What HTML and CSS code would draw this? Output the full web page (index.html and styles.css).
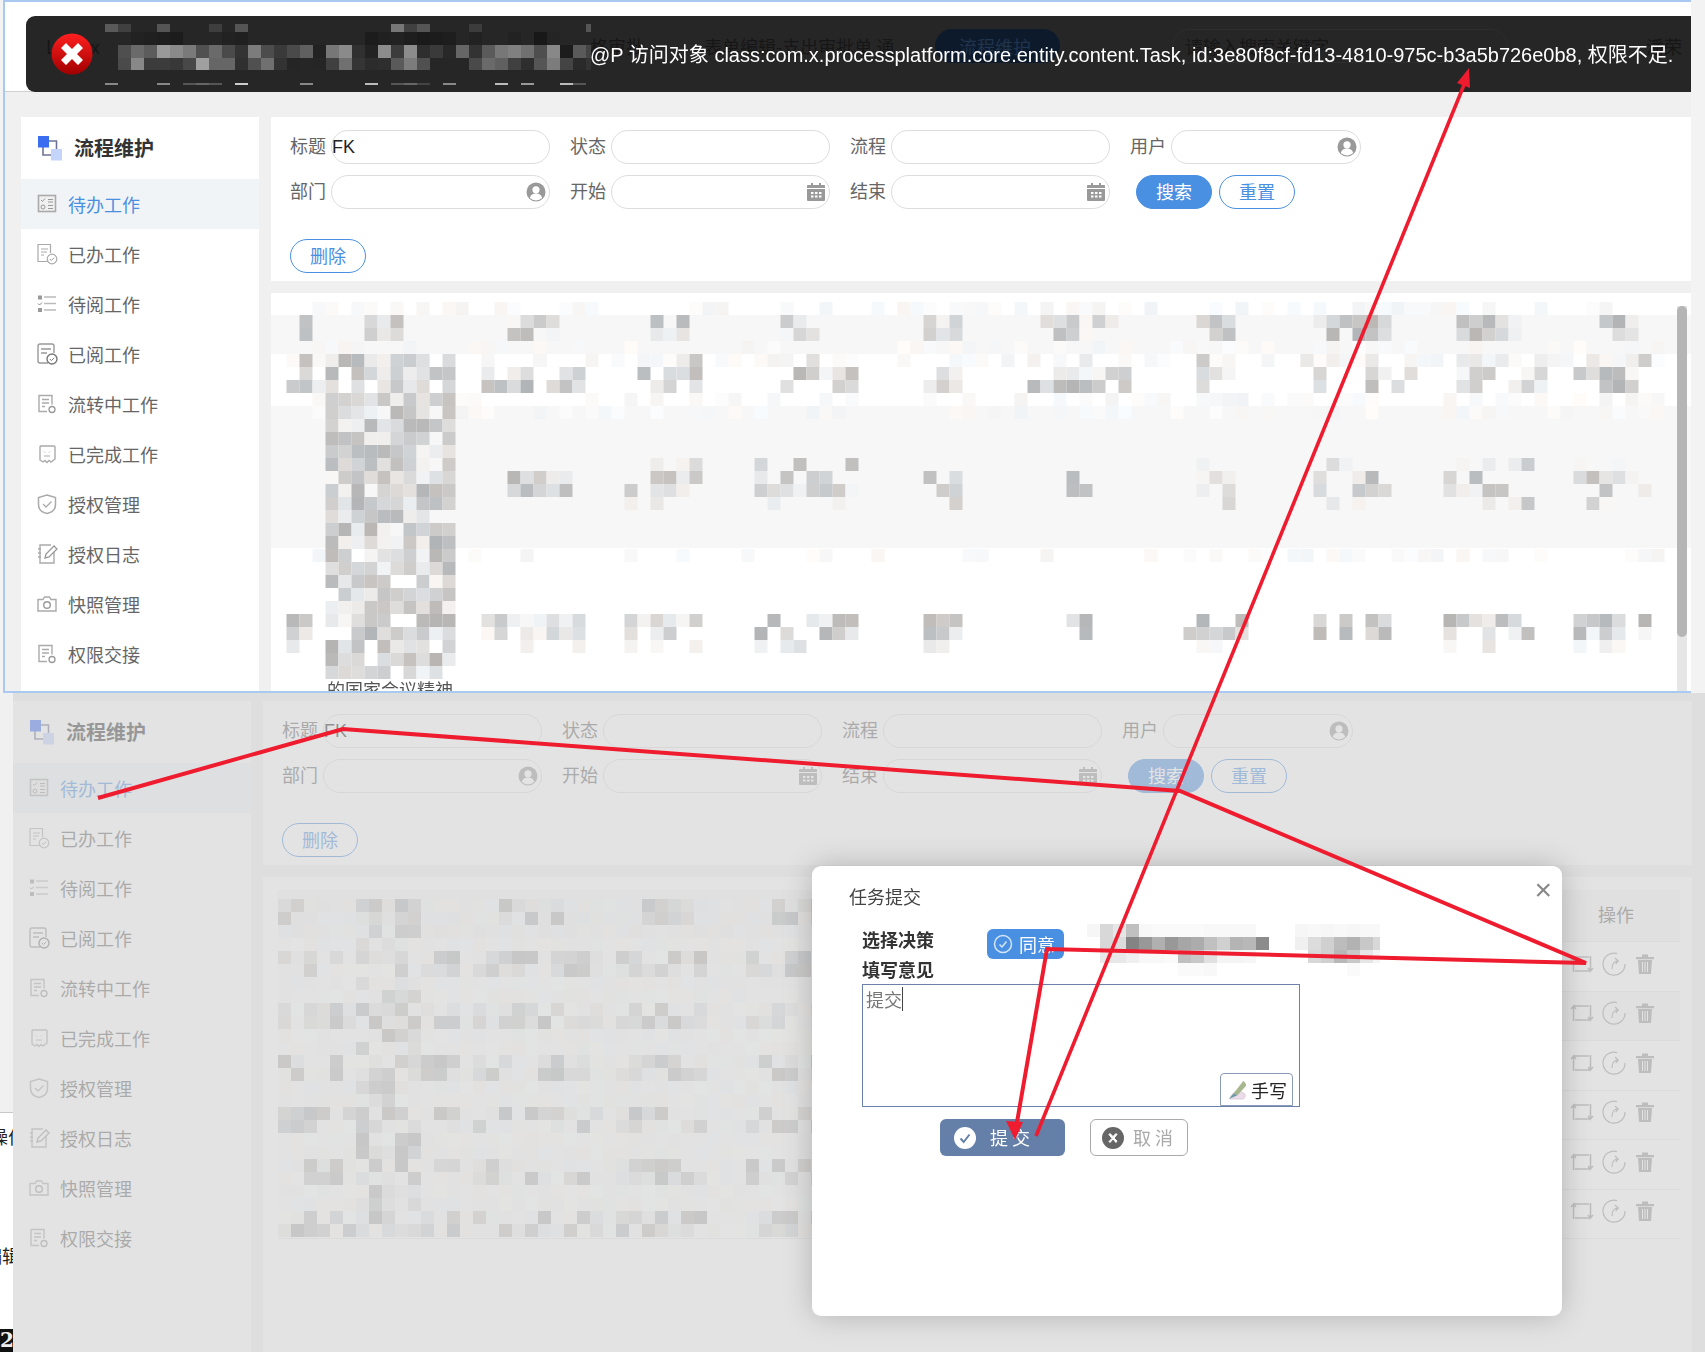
FILE: index.html
```html
<!DOCTYPE html>
<html lang="zh">
<head>
<meta charset="utf-8">
<title>流程维护</title>
<link rel="stylesheet" href="styles.css">
</head>
<body>
<svg class="defs" width="0" height="0" aria-hidden="true">
  <symbol id="i-logo" viewBox="0 0 26 26"><path d="M6 6h13.500v14H6z" fill="none" stroke="#6d7396" stroke-width="1.600"/><rect x="1" y="1" width="11" height="11.500" fill="#3a6df0"/><rect x="14" y="14" width="11" height="11.500" fill="#c4d4fb"/></symbol>
  <symbol id="i-todo" viewBox="0 0 22 22"><rect x="2.500" y="2.500" width="17" height="16" fill="#f0f0f0" stroke="#aaa" stroke-width="1.600"/><path d="M5 7l1.500 1.500L9 5.500M12 6.500h5M12 9h5M12 12.500h5M12 15.500h5" fill="none" stroke="#999"/><circle cx="7" cy="14" r="2" fill="none" stroke="#999"/></symbol>
  <symbol id="i-done" viewBox="0 0 22 22"><path d="M13.500 18.500H2V1.500h12.500v8.500M5 6h7M5 9h6M5 12h3" fill="none" stroke="#aaa" stroke-width="1.200"/><circle cx="16" cy="16" r="4.800" fill="#fff" stroke="#aaa" stroke-width="1.200"/><path d="M13.800 16l1.500 1.500 2.800-2.800" fill="none" stroke="#999"/></symbol>
  <symbol id="i-list" viewBox="0 0 22 22"><path d="M2 2.500h4v4H2zM2 15h4v4H2z" fill="#999"/><path d="M8 4h12M8 10.500h12M8 17h12" stroke="#bbb" stroke-width="1.300"/><path d="M2 10.500l1.500 1.500 2.500-2.500" fill="none" stroke="#888"/></symbol>
  <symbol id="i-read" viewBox="0 0 22 22"><path d="M12 20H4a2 2 0 0 1-2-2V3a2 2 0 0 1 2-2h12a2 2 0 0 1 2 2v7M5 6h10M5 10h6" fill="none" stroke="#999" stroke-width="1.400"/><circle cx="16" cy="16" r="5" fill="#fff" stroke="#777" stroke-width="1.400"/><path d="M13.800 16l1.600 1.600 2.800-2.800" fill="none" stroke="#777"/></symbol>
  <symbol id="i-flow" viewBox="0 0 22 22"><path d="M11 18.500H3V2.500h13v9M6 6.500h7M6 10h7M6 13.500h3" fill="none" stroke="#aaa" stroke-width="1.400"/><circle cx="16" cy="16.500" r="3" fill="#fff" stroke="#999" stroke-width="1.300"/></symbol>
  <symbol id="i-tag" viewBox="0 0 22 22"><path d="M4 3h14a1 1 0 0 1 1 1v12l-4 3-2-1.500-2 2-2-2-2 1.500-3-2V4a1 1 0 0 1 1-1z" fill="none" stroke="#aaa" stroke-width="1.400"/><path d="M8 8.500l1 1M14 8.500l-1 1M8 13h6" fill="none" stroke="#aaa"/></symbol>
  <symbol id="i-shield" viewBox="0 0 22 22"><path d="M11 2l8.500 2.500v7c0 5-4 8-8.500 9-4.500-1-8.500-4-8.500-9v-7z" fill="none" stroke="#aaa" stroke-width="1.500"/><path d="M7 11l3 3 5.500-5.500" fill="none" stroke="#aaa" stroke-width="1.300"/></symbol>
  <symbol id="i-log" viewBox="0 0 22 22"><path d="M15 2H4v18h14V9M2 6h3M2 10h3M2 14h3" fill="none" stroke="#aaa" stroke-width="1.400"/><path d="M9 15l1-4 8-8 3 3-8 8z" fill="#fff" stroke="#999" stroke-width="1.300"/></symbol>
  <symbol id="i-cam" viewBox="0 0 22 22"><path d="M2 6.500h5l1.500-2.500h5L15 6.500h5v11.500H2z" fill="none" stroke="#aaa" stroke-width="1.400"/><circle cx="11" cy="12" r="3.300" fill="none" stroke="#999" stroke-width="1.400"/></symbol>
  <symbol id="i-user" viewBox="0 0 20 20"><circle cx="10" cy="10" r="9.500" fill="#999"/><circle cx="10" cy="7.800" r="3.600" fill="#fff"/><path d="M3.800 16c1-3.500 3.500-4.500 6.200-4.500s5.200 1 6.200 4.500a9 9 0 0 1-12.400 0z" fill="#fff"/></symbol>
  <symbol id="i-cal" viewBox="0 0 20 20"><path d="M2 3h3V1h2v2h6V1h2v2h3a1 1 0 0 1 1 1v14a1 1 0 0 1-1 1H2a1 1 0 0 1-1-1V4a1 1 0 0 1 1-1z" fill="#999"/><path d="M1 6.500h18" stroke="#fff"/><path d="M5 10h2.500v2H5zM9 10h2.500v2H9zM13 10h2.500v2H13zM5 13.500h2.500v2H5zM9 13.500h2.500v2H9zM13 13.500h2.500v2H13z" fill="#fff"/></symbol>
  <symbol id="i-move" viewBox="0 0 24 20"><path d="M3.500 18V3l-2.500 3M3.500 3l2.500 3M3.500 3H19M20.500 2v15l2.500-3M20.500 17L18 14M20.500 17H5" fill="none" stroke="#999" stroke-width="1.500"/></symbol>
  <symbol id="i-redo" viewBox="0 0 24 24"><path d="M15 1.600A11 11 0 1 0 23 12" fill="none" stroke="#999" stroke-width="1.200"/><path d="M10 17c0-5 2-8 6-8M13 6l3.200 3-2.600 3" fill="none" stroke="#999" stroke-width="1.200"/></symbol>
  <symbol id="i-trash" viewBox="0 0 18 20"><path d="M0 3h18v2.200H0zM6 .5h6V3H6zM2 6h14l-1 14H3z" fill="#999"/><path d="M6.500 8v10M9 8v10M11.500 8v10" stroke="#fff" stroke-width="1"/></symbol>
</svg>

<div class="page">
  <section class="window window-top">
    <div class="top-head"></div>
    <div class="toast">
      <div class="ghost">
        <span class="ghost-a">Lo...ex</span>
        <span class="ghost-b">格审批</span>
        <span class="ghost-c">表单编辑-支出审批单 通用</span>
        <span class="ghost-pill">流程维护</span>
        <span class="ghost-search">请输入搜索关键字</span>
        <span class="ghost-d">潘荣</span>
      </div>
      <svg class="toast-icon" viewBox="0 0 42 42">
        <defs><linearGradient id="red" x1="0" y1="0" x2="0" y2="1"><stop offset="0" stop-color="#ff1f1f"/><stop offset="1" stop-color="#a00000"/></linearGradient></defs>
        <circle cx="21" cy="21" r="20.500" fill="url(#red)"/>
        <path d="M10 15l5-5 6 6 6-6 5 5-6 6 6 6-5 5-6-6-6 6-5-5 6-6z" fill="#fff"/>
      </svg>
      <canvas class="mosaic-toast" id="mosaicToast" width="486" height="61"></canvas>
      <span class="toast-msg">@P 访问对象 class:com.x.processplatform.core.entity.content.Task, id:3e80f8cf-fd13-4810-975c-b3a5b726e0b8, 权限不足.</span>
    </div>
    <div class="app app-top">
      <aside class="sidebar">
        <div class="side-title"><svg class="logo"><use href="#i-logo"/></svg><span>流程维护</span></div>
        <a class="nav active"><svg class="nav-icon"><use href="#i-todo"/></svg><span>待办工作</span></a>
        <a class="nav"><svg class="nav-icon"><use href="#i-done"/></svg><span>已办工作</span></a>
        <a class="nav"><svg class="nav-icon"><use href="#i-list"/></svg><span>待阅工作</span></a>
        <a class="nav"><svg class="nav-icon"><use href="#i-read"/></svg><span>已阅工作</span></a>
        <a class="nav"><svg class="nav-icon"><use href="#i-flow"/></svg><span>流转中工作</span></a>
        <a class="nav"><svg class="nav-icon"><use href="#i-tag"/></svg><span>已完成工作</span></a>
        <a class="nav"><svg class="nav-icon"><use href="#i-shield"/></svg><span>授权管理</span></a>
        <a class="nav"><svg class="nav-icon"><use href="#i-log"/></svg><span>授权日志</span></a>
        <a class="nav"><svg class="nav-icon"><use href="#i-cam"/></svg><span>快照管理</span></a>
        <a class="nav"><svg class="nav-icon"><use href="#i-flow"/></svg><span>权限交接</span></a>
      </aside>
      <main class="main">
        <div class="panel">
          <div class="form-row">
            <label class="field"><span class="lab">标题</span><span class="input">FK</span></label>
            <label class="field"><span class="lab">状态</span><span class="input"></span></label>
            <label class="field"><span class="lab">流程</span><span class="input"></span></label>
            <label class="field field-short"><span class="lab">用户</span><span class="input"><svg class="input-icon"><use href="#i-user"/></svg></span></label>
          </div>
          <div class="form-row">
            <label class="field"><span class="lab">部门</span><span class="input"><svg class="input-icon"><use href="#i-user"/></svg></span></label>
            <label class="field"><span class="lab">开始</span><span class="input"><svg class="input-icon"><use href="#i-cal"/></svg></span></label>
            <label class="field"><span class="lab">结束</span><span class="input"><svg class="input-icon"><use href="#i-cal"/></svg></span></label>
            <span class="btn btn-fill btn-search">搜索</span>
            <span class="btn btn-line">重置</span>
          </div>
          <div class="actions"><span class="btn btn-line">删除</span></div>
        </div>
        <div class="table table-top">
          <canvas class="mosaic" id="mosaicTop" width="1420" height="400"></canvas>
          <div class="band band-22"></div>
          <div class="band band-39 stripe"></div>
          <div class="band band-52"></div>
          <div class="band band-142 stripe"></div>
          <div class="band band-132"></div>
          <div class="caption">的国家会议精神</div>
          <div class="scroll"><div class="thumb"></div></div>
        </div>
      </main>
    </div>
  </section>

  <div class="lower">
    <div class="strip">
      <div class="strip-grey"></div>
      <div class="strip-white"><span class="strip-a">操作</span><span class="strip-b">编辑</span></div>
      <div class="strip-black">2</div>
    </div>
    <section class="window window-low">
      <div class="app app-low">
        <aside class="sidebar">
          <div class="side-title"><svg class="logo"><use href="#i-logo"/></svg><span>流程维护</span></div>
          <a class="nav active"><svg class="nav-icon"><use href="#i-todo"/></svg><span>待办工作</span></a>
          <a class="nav"><svg class="nav-icon"><use href="#i-done"/></svg><span>已办工作</span></a>
          <a class="nav"><svg class="nav-icon"><use href="#i-list"/></svg><span>待阅工作</span></a>
          <a class="nav"><svg class="nav-icon"><use href="#i-read"/></svg><span>已阅工作</span></a>
          <a class="nav"><svg class="nav-icon"><use href="#i-flow"/></svg><span>流转中工作</span></a>
          <a class="nav"><svg class="nav-icon"><use href="#i-tag"/></svg><span>已完成工作</span></a>
          <a class="nav"><svg class="nav-icon"><use href="#i-shield"/></svg><span>授权管理</span></a>
          <a class="nav"><svg class="nav-icon"><use href="#i-log"/></svg><span>授权日志</span></a>
          <a class="nav"><svg class="nav-icon"><use href="#i-cam"/></svg><span>快照管理</span></a>
          <a class="nav"><svg class="nav-icon"><use href="#i-flow"/></svg><span>权限交接</span></a>
        </aside>
        <main class="main">
          <div class="panel">
            <div class="form-row">
              <label class="field"><span class="lab">标题</span><span class="input">FK</span></label>
              <label class="field"><span class="lab">状态</span><span class="input"></span></label>
              <label class="field"><span class="lab">流程</span><span class="input"></span></label>
              <label class="field field-short"><span class="lab">用户</span><span class="input"><svg class="input-icon"><use href="#i-user"/></svg></span></label>
            </div>
            <div class="form-row">
              <label class="field"><span class="lab">部门</span><span class="input"><svg class="input-icon"><use href="#i-user"/></svg></span></label>
              <label class="field"><span class="lab">开始</span><span class="input"><svg class="input-icon"><use href="#i-cal"/></svg></span></label>
              <label class="field"><span class="lab">结束</span><span class="input"><svg class="input-icon"><use href="#i-cal"/></svg></span></label>
              <span class="btn btn-fill btn-search">搜索</span>
              <span class="btn btn-line">重置</span>
            </div>
            <div class="actions"><span class="btn btn-line">删除</span></div>
          </div>
          <div class="table table-low">
            <canvas class="mosaic" id="mosaicLow" width="600" height="400"></canvas>
            <div class="t-head"><span class="t-op-head">操作</span></div>
            <div class="t-row"><div class="ops"><svg class="op op-move"><use href="#i-move"/></svg><svg class="op op-redo"><use href="#i-redo"/></svg><svg class="op op-trash"><use href="#i-trash"/></svg></div></div>
            <div class="t-row stripe"><div class="ops"><svg class="op op-move"><use href="#i-move"/></svg><svg class="op op-redo"><use href="#i-redo"/></svg><svg class="op op-trash"><use href="#i-trash"/></svg></div></div>
            <div class="t-row"><div class="ops"><svg class="op op-move"><use href="#i-move"/></svg><svg class="op op-redo"><use href="#i-redo"/></svg><svg class="op op-trash"><use href="#i-trash"/></svg></div></div>
            <div class="t-row"><div class="ops"><svg class="op op-move"><use href="#i-move"/></svg><svg class="op op-redo"><use href="#i-redo"/></svg><svg class="op op-trash"><use href="#i-trash"/></svg></div></div>
            <div class="t-row"><div class="ops"><svg class="op op-move"><use href="#i-move"/></svg><svg class="op op-redo"><use href="#i-redo"/></svg><svg class="op op-trash"><use href="#i-trash"/></svg></div></div>
            <div class="t-row"><div class="ops"><svg class="op op-move"><use href="#i-move"/></svg><svg class="op op-redo"><use href="#i-redo"/></svg><svg class="op op-trash"><use href="#i-trash"/></svg></div></div>
          </div>
        </main>
      </div>
      <div class="mask"></div>
      <div class="modal">
        <div class="modal-title">任务提交</div>
        <span class="modal-close">×</span>
        <div class="modal-body">
          <div class="decide">
            <span class="m-label">选择决策</span>
            <span class="agree"><svg class="agree-icon" viewBox="0 0 20 20"><circle cx="10" cy="10" r="8.500" fill="none" stroke="#d5e6fa" stroke-width="1.500"/><path d="M6.500 10.500l2.500 2.500 4.500-5.500" fill="none" stroke="#d5e6fa" stroke-width="1.500"/></svg>同意</span>
            <canvas class="mosaic-modal" id="mosaicModal" width="293" height="52"></canvas>
          </div>
          <div class="m-label m-label-2">填写意见</div>
          <div class="opinion">
            <span class="opinion-text">提交</span>
            <span class="hand">
              <svg class="hand-icon" viewBox="0 0 22 22"><path d="M3 21c1-4 4-8 9-9l6 3c2 2 1 5-1 6z" fill="#ecdcea" stroke="#c8b8cc" stroke-width=".6"/><path d="M7 15L17 2c2 1 3 3 3 5L11 17z" fill="#a8b88e"/><path d="M2 21l5-6 4 2z" fill="#6f9aa6"/></svg>手写
            </span>
          </div>
          <div class="m-actions">
            <span class="m-btn m-submit"><svg class="m-icon" viewBox="0 0 22 22"><circle cx="11" cy="11" r="11" fill="#fff"/><path d="M6.500 11.500l3.200 3.500 5.800-7.500" fill="none" stroke="#6580a8" stroke-width="2"/></svg><span class="m-text">提交</span></span>
            <span class="m-btn m-cancel"><svg class="m-icon" viewBox="0 0 22 22"><circle cx="11" cy="11" r="11" fill="#666"/><path d="M7 7.500L8 6.500l3 3 3-3 1 1-3 3.500 3 3-1 1.500-3-3.500-3 3.500L7 14.500l3-3z" fill="#fff" stroke="#fff"/></svg><span class="m-text">取消</span></span>
          </div>
        </div>
      </div>
    </section>
  </div>

  <svg class="arrows" viewBox="0 0 1705 1352" aria-hidden="true">
    <polyline points="98,798 343,729 1180,791 1586,963 1047,949 1016,1128" fill="none" stroke="#ee1c2e" stroke-width="4" stroke-linejoin="miter"/>
    <line x1="1036" y1="1136" x2="1466" y2="80" stroke="#ee1c2e" stroke-width="3.600"/>
    <polygon points="1015,1140 1006,1121 1023,1122" fill="#ee1c2e"/>
    <polygon points="1469,68 1457,83 1470,88" fill="#ee1c2e"/>
  </svg>
</div>
<script src="mosaic.js"></script>
</body>
</html>
```
FILE: styles.css
```css
* { box-sizing: border-box; }
html, body { margin: 0; padding: 0; }
body { font-family: "Noto Sans CJK SC", "Liberation Sans", sans-serif; font-size: 18px; color: #666; background: #f3f3f3; }
.defs { position: absolute; }
.page { position: relative; width: 1705px; height: 1352px; overflow: hidden; }

.window-top { position: relative; margin-left: 3px; width: 1688px; height: 693px; overflow: hidden; background: #f0f0f0; border: solid #a9c9f2; border-width: 2px 0 2px 2px; }
.top-head { height: 90px; background: #fff; border-bottom: 1px solid #d0d0d0; }

.toast { position: absolute; left: 21px; right: 0; top: 14px; height: 76px; display: flex; align-items: center; padding-left: 25px; background: #262626; border-radius: 9px 0 0 9px; overflow: hidden; }
.ghost { position: absolute; inset: 16px 0 auto 0; display: flex; align-items: center; height: 28px; font-size: 18px; color: #161616; white-space: nowrap; }
.ghost-a { margin-left: 20px; width: 60px; }
.ghost-b { margin-left: 484px; }
.ghost-c { margin-left: 60px; width: 189px; overflow: hidden; }
.ghost-pill { margin-left: 42px; width: 125px; height: 34px; padding-left: 24px; line-height: 34px; border-radius: 17px; background: #0d1a2c; color: #20344c; }
.ghost-search { margin-left: 112px; width: 336px; height: 34px; padding-left: 12px; line-height: 32px; border: 1px solid #2e2e2e; border-radius: 17px; }
.ghost-d { margin-left: 138px; }
.toast-icon { position: relative; width: 42px; height: 42px; flex: none; }
.mosaic-toast { position: relative; flex: none; margin-left: 12px; width: 486px; height: 61px; }
.toast-msg { position: relative; margin: 0 0 2px -1px; font-family: "Liberation Sans", "Noto Sans CJK SC", sans-serif; font-size: 20px; color: #fff; white-space: nowrap; }

.app { display: flex; gap: 12px; }
.app-top { margin-top: 25px; padding-left: 16px; height: 574px; }
.sidebar { flex: none; width: 238px; background: #fff; }
.side-title { display: flex; align-items: center; height: 62px; padding: 0 0 1px 16px; font-size: 20px; font-weight: 700; color: #333; }
.logo { width: 26px; height: 26px; margin-right: 11px; }
.nav { display: flex; align-items: center; height: 50px; padding: 0 0 1px 15px; color: #666; }
.nav-icon { width: 22px; height: 22px; margin-right: 10px; flex: none; }
.nav.active { background: #f1f4f7; color: #4a90e2; }

.main { flex: 1; min-width: 0; display: flex; flex-direction: column; gap: 12px; }
.panel { height: 164px; flex: none; padding: 13px 0 0 19px; background: #fff; }
.form-row { display: flex; align-items: center; height: 34px; margin-bottom: 11px; }
.field { display: flex; align-items: center; width: 260px; margin-right: 20px; }
.field-short { width: 231px; margin-right: 0; }
.lab { width: 41px; flex: none; line-height: 30px; padding-bottom: 4px; }
.input { flex: 1; display: flex; align-items: center; justify-content: space-between; height: 34px; padding: 0 2px 0 0; border: 1px solid #ddd; border-radius: 17px; font-family: "Liberation Sans", sans-serif; color: #222; }
.input-icon { width: 20px; height: 20px; margin: 0 1px 0 auto; }
.btn { display: flex; align-items: center; justify-content: center; width: 76px; height: 34px; padding-bottom: 2px; border: 1px solid #4a90e2; border-radius: 17px; color: #4a90e2; }
.btn-fill { background: #4a90e2; color: #fff; }
.btn-search { margin: 0 7px 0 6px; }
.actions { margin-top: 30px; }

.table { position: relative; flex: 1; background: #fff; overflow: hidden; }
.mosaic { position: absolute; left: 0; top: 0; z-index: 1; }
.band-22 { height: 22px; }
.band-39 { height: 39px; }
.band-52 { height: 52px; }
.band-142 { height: 142px; }
.band-132 { height: 132px; }
.stripe { background: #f7f7f7; }
.caption { position: relative; z-index: 2; padding-left: 56px; line-height: 18px; color: #555; white-space: nowrap; }
.scroll { position: absolute; z-index: 2; right: 4px; top: 13px; bottom: 0; width: 10px; background: #e6e6e6; }
.thumb { height: 331px; border-radius: 5px; background: #b5b5b5; }

.lower { display: flex; height: 659px; }
.strip { flex: none; width: 13px; display: flex; flex-direction: column; overflow: hidden; }
.strip-grey { height: 420px; background: #f0f0f0; border-bottom: 1px solid #c8c8c8; }
.strip-white { flex: 1; display: flex; flex-direction: column; padding-top: 10px; background: #fff; color: #222; white-space: nowrap; }
.strip-a { margin-left: -10px; line-height: 26px; }
.strip-b { margin: 93px 0 0 -16px; line-height: 26px; }
.strip-black { height: 23px; background: #111; color: #eee; font-family: "DejaVu Serif", serif; font-weight: 700; font-size: 20px; line-height: 23px; }

.window-low { position: relative; flex: 1; padding: 8px 13px 0 0; background: #f0f0f0; }
.app-low { height: 100%; }
.mask { position: absolute; inset: 0; z-index: 3; background: rgba(210, 210, 210, .63); }

.t-head { position: relative; display: flex; justify-content: flex-end; align-items: center; margin: 13px 12px 0 15px; height: 52px; padding-bottom: 4px; background: #f7f7f7; border-bottom: 1px solid #e8e8e8; }
.t-op-head { width: 90px; margin-right: 19px; text-align: center; color: #666; }
.t-row { position: relative; display: flex; justify-content: flex-end; align-items: center; margin: 0 12px 0 15px; height: 49.5px; padding-bottom: 5px; border-bottom: 1px solid #e8e8e8; }
.ops { display: flex; align-items: center; padding-right: 26px; }
.op { flex: none; }
.op-move { width: 24px; height: 20px; margin-right: 8px; }
.op-redo { width: 24px; height: 24px; margin-right: 10px; }
.op-trash { width: 18px; height: 20px; }

.modal { position: absolute; z-index: 4; left: 799px; top: 173px; width: 750px; height: 450px; background: #fff; border-radius: 9px; box-shadow: 0 0 30px rgba(0, 0, 0, .22); }
.modal-title { padding: 17px 0 0 37px; line-height: 26px; color: #444; }
.modal-close { position: absolute; right: 10px; top: 6px; font-family: "Liberation Sans", sans-serif; font-size: 30px; line-height: 36px; color: #888; }
.modal-body { padding: 15px 0 0 50px; }
.decide { display: flex; align-items: flex-start; height: 35px; }
.m-label { font-weight: 700; font-size: 18px; line-height: 24px; color: #333; }
.decide .m-label { width: 125px; margin-top: 3px; }
.m-label-2 { height: 25px; margin-top: -2px; padding-bottom: 2px; }
.agree { display: flex; align-items: center; gap: 6px; width: 77px; height: 30px; margin-top: 5px; padding-left: 6px; border-radius: 6px; background: #4a90e2; color: #fff; }
.agree-icon { width: 20px; height: 20px; flex: none; }
.mosaic-modal { flex: none; margin-left: 23px; width: 293px; height: 52px; }
.opinion { position: relative; width: 438px; height: 123px; margin-top: 2px; padding: 1px 0 0 3px; border: 1px solid #6a82a8; }
.opinion-text { display: inline-block; height: 24px; line-height: 24px; border-right: 1px solid #444; color: #777; }
.hand { position: absolute; right: 6px; bottom: 0; display: flex; align-items: center; width: 73px; height: 33px; padding-left: 6px; gap: 3px; border: 1px solid #8a9ab8; border-radius: 4px 4px 0 0; background: #fff; color: #222; }
.hand-icon { width: 21px; height: 21px; flex: none; }
.m-actions { display: flex; gap: 25px; margin: 12px 0 0 78px; }
.m-btn { display: flex; align-items: center; height: 37px; padding-bottom: 2px; border-radius: 6px; }
.m-icon { width: 22px; height: 22px; flex: none; margin-top: 2px; }
.m-submit { width: 125px; padding-left: 14px; background: #6580a8; color: #fff; }
.m-cancel { width: 98px; padding-left: 11px; border: 1px solid #aaa; color: #aaa; }
.m-text { margin-left: 14px; letter-spacing: 4px; white-space: nowrap; }
.m-cancel .m-text { margin-left: 9px; }

.arrows { position: absolute; left: 0; top: 0; z-index: 5; width: 1705px; height: 1352px; pointer-events: none; }
```
FILE: mosaic.js
```js
(function () {
  var seed = 73;
  function rnd() { seed = (seed * 16807) % 2147483647; return (seed & 0xffff) / 65536; }
  function gray(v) { var t = Math.floor(rnd() * 7) - 3; return 'rgb(' + (v + t) + ',' + v + ',' + (v - t) + ')'; }
  var C = 13;

  function scatter(ctx, x0, y0, blobs) {
    blobs.forEach(function (b) {
      for (var r = b[2]; r <= b[3]; r++) {
        for (var c = b[0]; c <= b[1]; c++) {
          var p = rnd(), v;
          if (p < b[4]) { v = 180 + Math.floor(rnd() * 50); }
          else if (p < b[4] + 0.2) { v = 232 + Math.floor(rnd() * 16); }
          else { continue; }
          ctx.fillStyle = gray(v);
          ctx.fillRect(x0 + c * C, y0 + r * C, C, C);
        }
      }
    });
  }
  function faintRow(ctx, x0, y0, r, c0, c1) {
    for (var c = c0; c <= c1; c++) {
      if (rnd() < 0.45) {
        ctx.fillStyle = gray(244 + Math.floor(rnd() * 9));
        ctx.fillRect(x0 + c * C, y0 + r * C, C, C);
      }
    }
  }

  /* upper table */
  var top = document.getElementById('mosaicTop').getContext('2d');
  [0, 3, 4, 7, 8, 19].forEach(function (r) { faintRow(top, 15.5, 9, r, 0, 105); });
  var blobs = [];
  [[0,1],[6,8],[17,20],[28,30],[38,40],[49,51],[58,63],[70,72],[79,84],[90,94],[101,103]].forEach(function (g) { blobs.push([g[0], g[1], 1, 2, 0.6]); });
  [[0,2],[15,22],[27,31],[37,43],[49,51],[57,64],[70,72],[78,86],[90,96],[99,104]].forEach(function (g) { blobs.push([g[0], g[1], 5, 6, 0.5]); blobs.push([g[0], g[1], 4, 4, 0.12]); });
  [[17,21],[26,31],[36,43],[49,51],[60,61],[70,72],[79,84],[89,95],[99,104]].forEach(function (g) { blobs.push([g[0], g[1], 13, 14, 0.55]); blobs.push([g[0], g[1], 12, 12, 0.08]); blobs.push([g[0], g[1], 15, 15, 0.1]); });
  [[0,1],[15,22],[26,31],[36,43],[49,51],[60,61],[69,73],[79,84],[89,95],[99,104]].forEach(function (g) { blobs.push([g[0], g[1], 24, 25, 0.5]); blobs.push([g[0], g[1], 26, 26, 0.1]); });
  blobs.push([3, 12, 4, 28, 0.72]);
  scatter(top, 15.5, 9, blobs);

  /* lower table: an even veil first, so the row rules stay hidden under the blur */
  var low = document.getElementById('mosaicLow').getContext('2d');
  for (var r = 1; r < 27; r++) {
    for (var c = 0; c < 44; c++) {
      var tone = r < 4 ? 245 + Math.floor(rnd() * 4) : 248 + Math.floor(rnd() * 7);
      low.fillStyle = gray(tone);
      low.fillRect(15 + c * C, 9 + r * C, C, C);
    }
  }
  blobs = [];
  [[0,1],[6,10],[17,21],[28,31],[38,41]].forEach(function (g) { blobs.push([g[0], g[1], 1, 2, 0.7]); });
  [5, 9, 13, 17, 21, 25].forEach(function (r) {
    [[0,2],[3,13],[15,24],[26,32],[36,41]].forEach(function (g) { blobs.push([g[0], g[1], r, r + 1, 0.45]); });
  });
  [[6,10,3,4],[6,10,7,8],[6,10,11,12],[6,10,15,16],[6,10,19,20],[6,10,23,24]].forEach(function (g) { blobs.push([g[0], g[1], g[2], g[3], 0.5]); });
  scatter(low, 15, 9, blobs);

  /* toast: values read cell by cell */
  var t = document.getElementById('mosaicToast').getContext('2d');
  function paint(ctx, x, y, h, vals) {
    vals.forEach(function (v, i) {
      if (!v) return;
      ctx.fillStyle = 'rgb(' + v + ',' + v + ',' + v + ')';
      ctx.fillRect(x + i * C, y, C, h);
    });
  }
  paint(t, 0, 0, 8, [90,64,0,0,85,0,0,0,62,0,85,0,0,0,0,0,0,0,0,0,0,0,119,64,85,0,0,0,60,0,0,0,0,0,0,0,0,85]);
  paint(t, 0, 8, 13, [0,0,34,32,30,28,38,38,38,34,32,38,38,38,38,38,38,38,38,38,28,32,34,30,26,28,30,38,34,38,38,34,38,24,36,38,38,38]);
  paint(t, 13, 21, 13, [79,106,92,153,138,122,80,106,74,51,124,76,58,74,96,34,119,138,48,34,140,60,140,46,58,40,102,51,90,119,128,112,78,136,28,90,68]);
  paint(t, 13, 34, 12, [74,136,60,60,56,72,160,102,102,48,80,112,51,37,38,37,64,112,53,44,46,90,124,80,38,38,38,74,106,96,64,46,85,124,68,42,51]);
  paint(t, 0, 59, 2, [136,0,0,0,136,0,85,102,85,0,204,0,0,0,0,136,0,0,0,0,187,0,85,102,68,0,136,0,0,0,187,0,153,0,0,187,85]);

  /* modal */
  var m = document.getElementById('mosaicModal').getContext('2d');
  paint(m, 0, 0, 13, [246,216,230,192,248,250,250,250,250,248,248,248,248,0,0,0,246,248,246,248,246,248,248]);
  paint(m, 0, 13, 13, [0,216,220,132,152,176,152,166,172,192,208,180,184,140,0,0,240,220,208,188,178,200,216]);
  paint(m, 0, 26, 13, [0,232,232,240,248,248,250,192,200,224,244,244,246,0,0,0,0,216,208,184,200,230,244]);
  paint(m, 0, 39, 13, [0,0,0,0,0,0,0,250,250,248,0,0,0,0,0,0,0,0,0,0,250,0,0]);
})();
```
